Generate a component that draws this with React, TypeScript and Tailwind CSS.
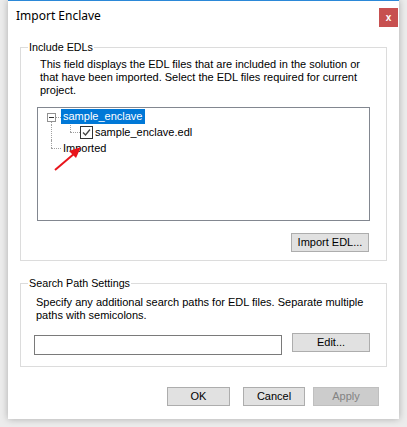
export default function App() {
  return (
    <div className="w-[407px] h-[427px] bg-[#ececec] px-[8px] pb-[8px] font-['Liberation_Sans',Arial,sans-serif] text-[11px] text-black">
      <div className="h-[419px] bg-white border-t border-[#2b88d8] shadow-[0_0_7px_rgba(0,0,0,0.28)] flex flex-col">
        {/* title bar */}
        <div className="h-[39px] flex items-start justify-between">
          <span className="pl-[8px] pt-[7px] text-[12px] leading-[16px] font-['Noto_Sans',sans-serif]">Import Enclave</span>
          <button className="mt-[7px] mr-[1px] w-[19px] h-[19px] bg-[#c75050] text-white text-[10px] leading-[17px] font-bold font-['Liberation_Sans',sans-serif]">
            x
          </button>
        </div>

        {/* Include EDLs */}
        <fieldset className="mx-[12px] border border-[#dcdcdc] p-0">
          <legend className="ml-[7px] px-[1px] text-[10.75px] leading-[14px]">Include EDLs</legend>
          <div className="px-[16px] pt-[4px] pb-[8px] flex flex-col">
            <p className="pl-[3px] leading-[13px] whitespace-nowrap">
              This field displays the EDL files that are included in the solution or
              <br />
              that have been imported. Select the EDL files required for current
              <br />
              project.
            </p>
            <div className="relative mt-[10px] h-[114px] border border-[#828790] bg-white pt-[1px] pl-[4px]">
              {/* row 1 */}
              <div className="flex h-[16px]">
                <div className="w-[19px] flex flex-col items-center">
                  <div className="h-[4px]" />
                  <div className="relative w-[9px] h-[9px] border border-[#919191] bg-white flex items-center justify-center">
                    <div className="w-[5px] h-[1px] bg-[#333]" />
                    <div className="absolute left-[8px] top-[3px] w-[5px] border-t border-dotted border-[#a0a0a0]" />
                  </div>
                  <div className="flex-1 border-l border-dotted border-[#a0a0a0]" />
                </div>
                <span className="bg-[#0078d7] text-white px-[2px] leading-[15px] h-[15px]">sample_enclave</span>
              </div>
              {/* row 2 */}
              <div className="flex h-[15px]">
                <div className="w-[19px] flex justify-center">
                  <div className="border-l border-dotted border-[#a0a0a0]" />
                </div>
                <div className="w-[19px] flex flex-col items-center">
                  <div className="h-[7px] border-l border-dotted border-[#a0a0a0]" />
                  <div className="self-end w-[10px] border-t border-dotted border-[#a0a0a0]" />
                </div>
                <div className="mt-[1px] w-[13px] h-[13px] border border-[#333] bg-white">
                  <svg width="11" height="11" viewBox="0 0 11 11">
                    <polyline points="2,5.5 4.5,8 9,2.5" fill="none" stroke="#444" strokeWidth="1.3" />
                  </svg>
                </div>
                <span className="ml-[2px] leading-[15px]">sample_enclave.edl</span>
              </div>
              {/* row 3 */}
              <div className="flex h-[16px]">
                <div className="w-[19px] flex flex-col items-center">
                  <div className="h-[8px] border-l border-dotted border-[#a0a0a0]" />
                  <div className="self-end w-[10px] border-t border-dotted border-[#a0a0a0]" />
                </div>
                <span className="px-[2px] leading-[16px]">Imported</span>
              </div>

              {/* annotation arrow */}
              <svg className="absolute left-0 top-0" width="100" height="80" viewBox="0 0 100 80">
                <line x1="17" y1="62" x2="37" y2="45" stroke="#e8141b" strokeWidth="2" />
                <polygon points="43,39 31,43 38,50" fill="#e8141b" />
              </svg>
            </div>
            <button className="self-end mt-[12px] mr-[1px] w-[78px] h-[19px] bg-[#e1e1e1] border border-[#adadad] leading-[17px]">
              Import EDL...
            </button>
          </div>
        </fieldset>

        {/* Search Path Settings */}
        <fieldset className="mt-[15px] mx-[12px] border border-[#dcdcdc] p-0">
          <legend className="ml-[7px] px-[1px] text-[10.75px] leading-[14px]">Search Path Settings</legend>
          <div className="pt-[6px] pb-[11px] flex flex-col">
            <p className="pl-[15px] leading-[13px] whitespace-nowrap">
              Specify any additional search paths for EDL files. Separate multiple
              <br />
              paths with semicolons.
            </p>
            <div className="mt-[11px] pl-[13px] pr-[16px] flex items-start justify-between">
              <div className="mt-[2px] w-[248px] h-[20px] border border-[#7a7a7a] bg-white" />
              <button className="w-[78px] h-[19px] bg-[#e1e1e1] border border-[#adadad] leading-[17px]">Edit...</button>
            </div>
          </div>
        </fieldset>

        {/* dialog buttons */}
        <div className="mt-[20px] pr-[20px] flex justify-end">
          <button className="w-[63px] h-[19px] bg-[#e1e1e1] border border-[#adadad] leading-[17px]">OK</button>
          <button className="ml-[13px] w-[62px] h-[19px] bg-[#e1e1e1] border border-[#adadad] leading-[17px]">Cancel</button>
          <button className="ml-[8px] w-[66px] h-[19px] bg-[#cccccc] border border-[#bfbfbf] text-[#838383] leading-[17px]">Apply</button>
        </div>
      </div>
    </div>
  )
}
